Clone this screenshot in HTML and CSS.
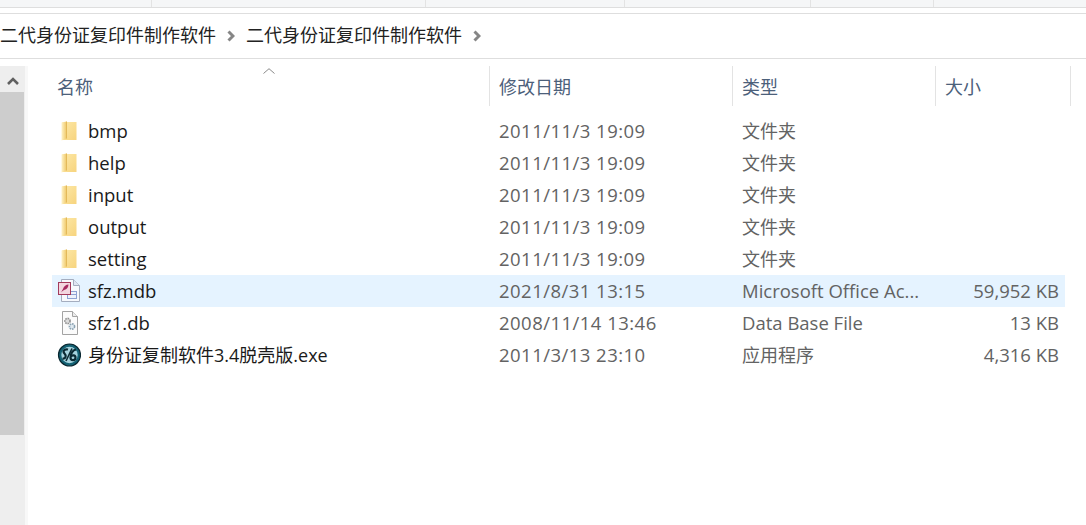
FILE: index.html
```html
<!DOCTYPE html>
<html lang="zh">
<head>
<meta charset="utf-8">
<title>二代身份证复印件制作软件</title>
<link rel="stylesheet" href="styles.css">
</head>
<body>
<svg class="defs" width="0" height="0" aria-hidden="true">
  <defs>
    <linearGradient id="fold" x1="0" y1="0" x2="1" y2="1">
      <stop offset="0" stop-color="#fde9a8"/>
      <stop offset="1" stop-color="#f7d47e"/>
    </linearGradient>
    <linearGradient id="leaf" x1="0" y1="0" x2="1" y2="0">
      <stop offset="0" stop-color="#fff3c8"/>
      <stop offset="1" stop-color="#efc868"/>
    </linearGradient>
    <symbol id="folder" viewBox="0 0 16 20">
      <path d="M5 1 H15.5 V19 H1 V1.5 Z" fill="url(#fold)"/>
      <path d="M0.5 1.5 L5.5 0.5 V17.5 L0.5 19.5 Z" fill="url(#leaf)"/>
      <path d="M5.5 0.5 V17.5" stroke="#e3b95a" stroke-width="1"/>
    </symbol>
  </defs>
</svg>
<div class="tabstrip">
  <span class="tab tab-a"></span><span class="tab tab-b"></span><span class="tab tab-c"></span><span class="tab tab-d"></span><span class="tab tab-e"></span>
</div>
<nav class="address">
  <span class="crumb">二代身份证复印件制作软件</span>
  <svg class="chev" viewBox="0 0 8 12"><path d="M1.5 1.5 L6 6 L1.5 10.5" fill="none" stroke="#868686" stroke-width="3"/></svg>
  <span class="crumb">二代身份证复印件制作软件</span>
  <svg class="chev" viewBox="0 0 8 12"><path d="M1.5 1.5 L6 6 L1.5 10.5" fill="none" stroke="#868686" stroke-width="3"/></svg>
</nav>
<main class="pane">
  <div class="scrollbar">
    <div class="scroll-up"><svg viewBox="0 0 12 8" class="up"><path d="M1 7 L6 2 L11 7" fill="none" stroke="#606060" stroke-width="2.6"/></svg></div>
    <div class="thumb"></div>
  </div>
  <div class="list">
    <div class="header">
      <svg class="sort" viewBox="0 0 12 6"><path d="M0.5 5.5 L6 0.7 L11.5 5.5" fill="none" stroke="#8a8a8a" stroke-width="1"/></svg>
      <div class="hcell h-name">名称</div>
      <div class="hcell h-date">修改日期</div>
      <div class="hcell h-type">类型</div>
      <div class="hcell h-size">大小</div>
    </div>
    <div class="rows">
      <div class="row"><span class="name"><svg class="ico"><use href="#folder"/></svg>bmp</span><span class="date">2011/11/3 19:09</span><span class="type cjk">文件夹</span><span class="size"></span></div>
      <div class="row"><span class="name"><svg class="ico"><use href="#folder"/></svg>help</span><span class="date">2011/11/3 19:09</span><span class="type cjk">文件夹</span><span class="size"></span></div>
      <div class="row"><span class="name"><svg class="ico"><use href="#folder"/></svg>input</span><span class="date">2011/11/3 19:09</span><span class="type cjk">文件夹</span><span class="size"></span></div>
      <div class="row"><span class="name"><svg class="ico"><use href="#folder"/></svg>output</span><span class="date">2011/11/3 19:09</span><span class="type cjk">文件夹</span><span class="size"></span></div>
      <div class="row"><span class="name"><svg class="ico"><use href="#folder"/></svg>setting</span><span class="date">2011/11/3 19:09</span><span class="type cjk">文件夹</span><span class="size"></span></div>
      <div class="row selected"><span class="name">
        <svg class="ico ico-file" viewBox="0 0 24 24">
          <path d="M4.5 0.5 H16.5 L22.5 6.5 V22.5 H4.5 Z" fill="#f7f9fd" stroke="#a4adbf"/>
          <path d="M16.5 0.5 V6.5 H22.5" fill="#dfe6f2" stroke="#a4adbf"/>
          <rect x="10.5" y="12.5" width="9" height="7" fill="#eef2fb" stroke="#8fa3d4"/>
          <path d="M10.5 15.5 H19.5" stroke="#8fa3d4"/>
          <rect x="1.5" y="3.5" width="12" height="12" fill="#f3d7e0" stroke="#a33a5c"/>
          <path d="M4 13.5 L6 10 C7 7 9 5.5 11.5 5.5 C11.5 8 10 10.5 7 11 L5 12.5 Z" fill="#a52a60"/>
        </svg>sfz.mdb</span><span class="date">2021/8/31 13:15</span><span class="type">Microsoft Office Ac...</span><span class="size">59,952 KB</span></div>
      <div class="row"><span class="name">
        <svg class="ico ico-file" viewBox="0 0 24 24">
          <path d="M5.5 0.5 H15.5 L20.5 5.5 V23.5 H5.5 Z" fill="#fbfbfb" stroke="#a3a3a3"/>
          <path d="M15.5 0.5 V5.5 H20.5" fill="#ececec" stroke="#a3a3a3"/>
          <circle cx="10.5" cy="10" r="2.6" fill="#dcdcdc" stroke="#909090" stroke-width="1.6" stroke-dasharray="1.6 .8"/>
          <circle cx="15" cy="15.5" r="2.6" fill="#dfe9f0" stroke="#8ca3b3" stroke-width="1.6" stroke-dasharray="1.6 .8"/>
        </svg>sfz1.db</span><span class="date">2008/11/14 13:46</span><span class="type">Data Base File</span><span class="size">13 KB</span></div>
      <div class="row"><span class="name">
        <svg class="ico ico-file" viewBox="0 0 24 24">
          <circle cx="12.5" cy="12" r="11" fill="#136173" stroke="#0a2730" stroke-width="1.2"/>
          <circle cx="12.5" cy="12" r="8.2" fill="#a6d3de"/>
          <path d="M11 6.5 C7 5.5 5.5 8.5 7.5 10.5 C9.5 12.5 9 16 5.5 15.5" fill="none" stroke="#0b2a33" stroke-width="2.2"/>
          <path d="M9 18 L15 5.5" fill="none" stroke="#0b2a33" stroke-width="1.6"/>
          <path d="M19 6.5 C15.5 7 13.5 11 13.5 14.5 C13.5 18 18.5 18 18.5 14.5 C18.5 12 15 11.5 13.5 14" fill="none" stroke="#0b2a33" stroke-width="2.2"/>
        </svg><span class="cjk">身份证复制软件3.4脱壳版.exe</span></span><span class="date">2011/3/13 23:10</span><span class="type cjk">应用程序</span><span class="size">4,316 KB</span></div>
    </div>
  </div>
</main>
</body>
</html>
```
FILE: styles.css
```css
* { box-sizing: border-box; }
html, body { margin: 0; padding: 0; height: 100%; overflow: hidden; background: #fff; }
body {
  font-family: "Open Sans", "Noto Sans CJK SC", sans-serif;
  font-size: 18.5px;
  color: #1a1a1a;
}
.defs { display: block; height: 0; }
.tabstrip {
  height: 8px;
  display: flex;
  background: #f5f6f7;
  border-bottom: 1px solid #dedede;
}
.tab { display: block; border-right: 1px solid #e3e3e3; height: 7px; flex: none; }
.tab-a { width: 152px; }
.tab-b { width: 274px; }
.tab-c { width: 199px; }
.tab-d { width: 186px; }
.tab-e { width: 123px; }
.address {
  margin-top: 5px;
  height: 46px;
  border-top: 1px solid #dedede;
  border-bottom: 1px solid #dedede;
  display: flex;
  align-items: center;
  font-size: 18px;
  line-height: 42px;
  padding-bottom: 2px;
}
.crumb { flex: none; color: #222; width: 216px; }
.chev { width: 8px; height: 12px; margin: 2px 0 0 11px; flex: none; }
.chev + .crumb { margin-left: 11px; }
.pane { display: flex; height: 466px; }
.scrollbar {
  flex: none;
  width: 25px;
  margin-top: 7px;
  background: #eeeeee;
  box-shadow: 3px 0 0 #f8f8f8;
}
.scroll-up { height: 26px; padding-top: 4px; display: flex; justify-content: center; align-items: center; }
.up { width: 12px; height: 8px; }
.thumb { height: 343px; width: 24px; background: #cdcdcd; }
.list { flex: 1; min-width: 0; padding-left: 27px; margin-top: 7px; }
.header { position: relative; display: flex; height: 40px; }
.sort { position: absolute; left: 211px; top: 2px; width: 12px; height: 6px; }
.hcell {
  flex: none;
  height: 40px;
  padding-top: 1px;
  line-height: 40px;
  color: #4c607a;
  border-right: 1px solid #e3e3e3;
  white-space: nowrap;
  font-size: 18px;
}
.h-name { width: 438px; padding-left: 5px; }
.h-date { width: 243px; padding-left: 9px; }
.h-type { width: 203px; padding-left: 9px; }
.h-size { width: 135px; padding-left: 9px; }
.rows { margin-top: 9px; width: 1013px; }
.row { display: flex; height: 32px; line-height: 30px; align-items: center; white-space: nowrap; color: #636363; }
.row.selected { background: #e5f3ff; }
.cjk { font-size: 18px; }
.name { display: flex; align-items: center; width: 438px; flex: none; color: #1a1a1a; padding-left: 5px; }
.date { width: 243px; flex: none; padding-left: 9px; letter-spacing: 0.47px; }
.type { width: 203px; flex: none; padding-left: 9px; }
.size { width: 123px; flex: none; text-align: right; }
.ico { width: 16px; height: 20px; margin: 0 11px 0 4px; flex: none; }
.ico-file { width: 24px; height: 24px; margin: 0 7px 0 0; }
```
